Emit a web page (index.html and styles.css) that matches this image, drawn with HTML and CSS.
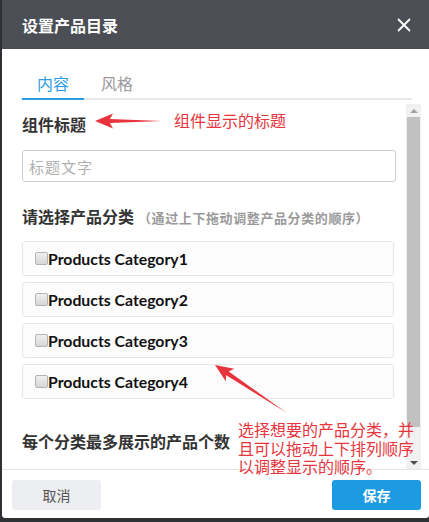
FILE: index.html
```html
<!DOCTYPE html>
<html lang="zh-CN">
<head>
  <meta charset="UTF-8">
  <meta name="viewport" content="width=device-width, initial-scale=1.0">
  <title>设置产品目录</title>
  <link rel="stylesheet" href="styles.css">
</head>
<body>
  <div class="modal">
    <div class="modal-head">
      <span class="modal-title">设置产品目录</span>
      <svg class="close" width="14" height="14" viewBox="0 0 14 14">
        <path d="M1 1L13 13M13 1L1 13" stroke="#fff" stroke-width="1.8" fill="none"/>
      </svg>
    </div>

    <div class="tabs">
      <span class="tab active">内容</span>
      <span class="tab">风格</span>
    </div>

    <div class="panel">
      <div class="panel-body">
        <div class="field-label first">组件标题</div>
        <input class="text-input" type="text" placeholder="标题文字">

        <div class="field-label second">请选择产品分类<small>（通过上下拖动调整产品分类的顺序）</small></div>
        <ul class="cat-list">
          <li class="cat-item" draggable="true"><input type="checkbox" class="cat-check">Products Category1</li>
          <li class="cat-item" draggable="true"><input type="checkbox" class="cat-check">Products Category2</li>
          <li class="cat-item" draggable="true"><input type="checkbox" class="cat-check">Products Category3</li>
          <li class="cat-item" draggable="true"><input type="checkbox" class="cat-check">Products Category4</li>
        </ul>

        <div class="field-label third">每个分类最多展示的产品个数</div>
      </div>
      <div class="scrollbar">
        <span class="sb-btn sb-up"></span>
        <span class="sb-thumb"></span>
        <span class="sb-btn sb-down"></span>
      </div>
    </div>

    <div class="modal-foot">
      <button class="btn btn-cancel">取消</button>
      <button class="btn btn-save">保存</button>
    </div>

    <!-- annotations drawn over the dialog -->
    <svg class="note-arrows" width="427" height="518" viewBox="0 0 427 518">
      <g fill="#e8343c">
        <polygon transform="translate(93 121)" points="0,0 18,-7.5 15,-2 67,0 15,2 18,7.5"/>
        <polygon transform="translate(213 365) rotate(33.7)" points="0,0 18,-7.5 15,-2.2 86,0 15,2.2 18,7.5"/>
      </g>
    </svg>
    <div class="note note-title">组件显示的标题</div>
    <div class="note note-cats">
      <div class="note-line">选择想要的产品分类，并</div>
      <div class="note-line">且可以拖动上下排列顺序</div>
      <div class="note-line">以调整显示的顺序。</div>
    </div>
  </div>
</body>
</html>
```

FILE: styles.css
```css
body {
    margin: 0;
    background: #2f3034;
    font-family: "Noto Sans CJK SC", "Liberation Sans", sans-serif;
}
.modal {
    position: relative;
    width: 427px;
    height: 518px;
    margin-left: 2px;
    background: #fff;
    display: flex;
    flex-direction: column;
    overflow: hidden;
    border-radius: 0 0 3px 3px;
}

/* header */
.modal-head {
    height: 49px;
    flex: none;
    background: #4b4e55;
    display: flex;
    align-items: center;
    justify-content: space-between;
    padding: 0 18px 0 20px;
}
.modal-title {
    color: #fff;
    font-size: 16px;
    font-weight: bold;
}

/* tabs */
.tabs {
    flex: none;
    display: flex;
    gap: 2px;
    margin: 0 17px 0 20px;
    padding-top: 22px;
    border-bottom: 2px solid #e8e8e8;
}
.tab {
    padding: 0 15px 3px;
    font-size: 16px;
    line-height: 24px;
    color: #9a9a9a;
}
.tab.active {
    color: #2b9de2;
    border-bottom: 2px solid #2b9de2;
    margin-bottom: -2px;
}

/* scroll panel */
.panel {
    flex: 1;
    min-height: 0;
    margin-top: 4px;
    display: flex;
}
.panel-body {
    width: 374px;
    padding: 0 10px 0 20px;
    overflow: hidden;
}
.field-label {
    height: 24px;
    font-size: 16px;
    line-height: 24px;
    font-weight: bold;
    color: #333;
}
.field-label small {
    font-size: 13px;
    line-height: 1;
    letter-spacing: 0.6px;
    color: #9a9a9a;
    margin-left: 4px;
}
.field-label.first { margin-top: 8px; }
.field-label.second { margin-top: 22px; }
.field-label.third { margin-top: 30px; }
.text-input {
    display: block;
    box-sizing: border-box;
    width: 374px;
    height: 32px;
    margin-top: 14px;
    padding: 0 6px;
    border: 1px solid #cfcfcf;
    border-radius: 3px;
    font-family: inherit;
    font-size: 15px;
    outline: none;
}
.text-input::placeholder {
    color: #b0b0b0;
    letter-spacing: 1px;
}
.cat-list {
    list-style: none;
    margin: 13px 2px 0 0;
    padding: 0;
    display: flex;
    flex-direction: column;
    gap: 6px;
}
.cat-item {
    height: 35px;
    box-sizing: border-box;
    display: flex;
    align-items: center;
    padding-left: 12px;
    background: #fcfcfc;
    border: 1px solid #e6e6e6;
    border-radius: 3px;
    font-family: Lato, "Liberation Sans", sans-serif;
    font-size: 15.8px;
    font-weight: bold;
    color: #111;
    cursor: move;
    user-select: none;
}
.cat-check {
    -webkit-appearance: none;
    appearance: none;
    width: 13px;
    height: 13px;
    margin: 0;
    border: 1px solid #b4b4b4;
    border-radius: 2px;
    background: linear-gradient(#f0f0f0, #d6d6d6);
}

/* fake scrollbar */
.scrollbar {
    width: 15px;
    margin-right: 8px;
    background: #f1f1f1;
    display: flex;
    flex-direction: column;
}
.sb-btn {
    height: 13px;
    display: flex;
    align-items: center;
    justify-content: center;
}
.sb-up::before,
.sb-down::before {
    content: "";
    border-left: 4px solid transparent;
    border-right: 4px solid transparent;
}
.sb-up::before { border-bottom: 4px solid #a3a3a3; }
.sb-down::before { border-top: 4px solid #505050; }
.sb-thumb {
    height: 310px;
    margin: 0 1px;
    background: #c1c1c1;
}
.sb-down { margin-top: auto; }

/* footer */
.modal-foot {
    flex: none;
    display: flex;
    justify-content: space-between;
    padding: 10px 8px 8px 10px;
    border-top: 1px solid #e6e6e6;
}
.btn {
    width: 89px;
    height: 30px;
    border: none;
    border-radius: 3px;
    font-family: inherit;
    font-size: 14px;
}
.btn-cancel {
    background: #eceef1;
    color: #555;
}
.btn-save {
    background: #1d9be2;
    color: #fff;
    font-weight: bold;
}

/* annotations */
.note-arrows {
    position: absolute;
    left: 0;
    top: 0;
    pointer-events: none;
}
.note {
    position: absolute;
    color: #e8343c;
    font-size: 16px;
    white-space: nowrap;
}
.note-title {
    left: 172px;
    top: 109px;
    line-height: 22px;
}
.note-cats {
    left: 236px;
    top: 420px;
}
.note-line {
    height: 18.5px;
    line-height: 18.5px;
}
```
